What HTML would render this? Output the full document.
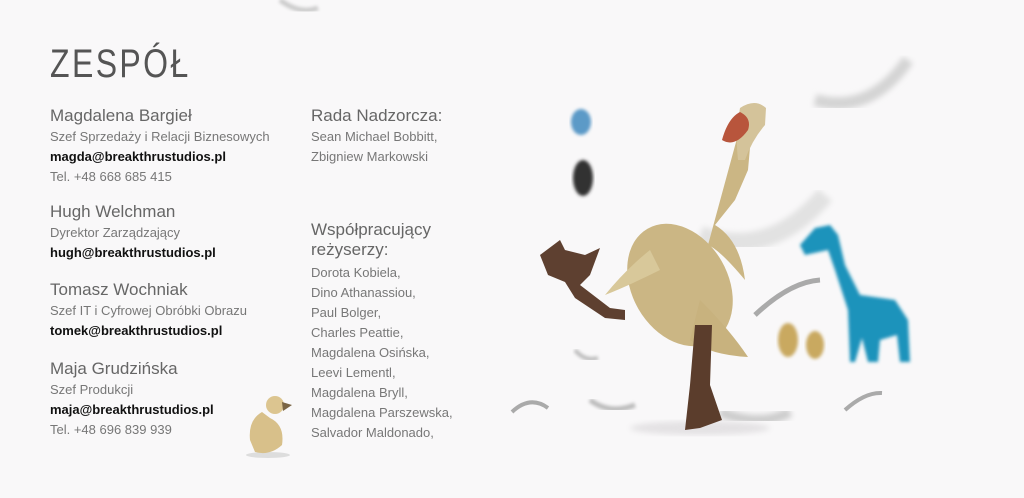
<!DOCTYPE html>
<html><head><meta charset="utf-8"><style>
html,body{margin:0;padding:0;}
body{width:1024px;height:498px;background:#f9f8f9;position:relative;overflow:hidden;font-family:"Liberation Sans",sans-serif;}
.t{position:absolute;white-space:nowrap;}
.h{font-size:17px;color:#666;}
.s{font-size:13px;color:#777;}
.m{font-size:13px;color:#111;font-weight:bold;}
#title{left:50px;top:42px;font-size:40px;color:#555;letter-spacing:3px;transform:scaleX(0.8);transform-origin:left top;}
</style></head><body>
<div class="t" id="title">ZESPÓŁ</div>

<div class="t h" style="left:50px;top:106px">Magdalena Bargieł</div>
<div class="t s" style="left:50px;top:129px">Szef Sprzedaży i Relacji Biznesowych</div>
<div class="t m" style="left:50px;top:149px">magda@breakthrustudios.pl</div>
<div class="t s" style="left:50px;top:169px">Tel. +48 668 685 415</div>

<div class="t h" style="left:50px;top:202px">Hugh Welchman</div>
<div class="t s" style="left:50px;top:225px">Dyrektor Zarządzający</div>
<div class="t m" style="left:50px;top:245px">hugh@breakthrustudios.pl</div>

<div class="t h" style="left:50px;top:280px">Tomasz Wochniak</div>
<div class="t s" style="left:50px;top:303px">Szef IT i Cyfrowej Obróbki Obrazu</div>
<div class="t m" style="left:50px;top:323px">tomek@breakthrustudios.pl</div>

<div class="t h" style="left:50px;top:359px">Maja Grudzińska</div>
<div class="t s" style="left:50px;top:382px">Szef Produkcji</div>
<div class="t m" style="left:50px;top:402px">maja@breakthrustudios.pl</div>
<div class="t s" style="left:50px;top:422px">Tel. +48 696 839 939</div>

<div class="t h" style="left:311px;top:106px">Rada Nadzorcza:</div>
<div class="t s" style="left:311px;top:129px">Sean Michael Bobbitt,</div>
<div class="t s" style="left:311px;top:149px">Zbigniew Markowski</div>

<div class="t h" style="left:311px;top:220px">Współpracujący</div>
<div class="t h" style="left:311px;top:240px">reżyserzy:</div>
<div class="t s" style="left:311px;top:263px;line-height:20px">Dorota Kobiela,<br>Dino Athanassiou,<br>Paul Bolger,<br>Charles Peattie,<br>Magdalena Osińska,<br>Leevi Lementl,<br>Magdalena Bryll,<br>Magdalena Parszewska,<br>Salvador Maldonado,</div>

<svg width="1024" height="498" style="position:absolute;left:0;top:0" xmlns="http://www.w3.org/2000/svg">
<defs><filter id="b"><feGaussianBlur stdDeviation="3"/></filter><filter id="b2"><feGaussianBlur stdDeviation="1.5"/></filter></defs>
<!-- little duckling -->
<ellipse cx="268" cy="455" rx="22" ry="3" fill="#ddd"/>
<path d="M250 440 Q248 420 262 412 L270 418 Q285 425 282 445 Q270 456 255 452Z" fill="#d8c08a"/>
<circle cx="275" cy="405" r="9" fill="#dcc590"/>
<path d="M282 402 L292 405 L283 411Z" fill="#7a6545"/>
<!-- feathers blur -->
<path d="M280 0 Q300 15 318 8" stroke="#ccc" stroke-width="5" fill="none" filter="url(#b2)"/>
<path d="M815 100 Q870 115 908 60" stroke="#d4d4d4" stroke-width="12" fill="none" filter="url(#b)"/>
<path d="M700 235 Q770 260 825 195" stroke="#e2e2e2" stroke-width="18" fill="none" filter="url(#b)"/>
<path d="M575 350 Q585 362 598 358" stroke="#bbb" stroke-width="4" fill="none" filter="url(#b2)"/>
<path d="M590 400 Q610 415 635 405" stroke="#bbb" stroke-width="5" fill="none" filter="url(#b2)"/>
<path d="M720 412 Q760 428 790 412" stroke="#ccc" stroke-width="10" fill="none" filter="url(#b)"/>
<path d="M512 412 Q530 395 548 408" stroke="#aaa" stroke-width="4" fill="none"/>
<path d="M845 410 Q865 392 882 393" stroke="#aaa" stroke-width="4" fill="none"/>
<path d="M755 315 Q790 282 820 280" stroke="#aaa" stroke-width="5" fill="none"/>
<!-- balloon bird -->
<ellipse cx="581" cy="122" rx="10" ry="13" fill="#5b9ac7" filter="url(#b2)"/>
<ellipse cx="583" cy="178" rx="10" ry="18" fill="#333" filter="url(#b2)"/>
<!-- giraffe -->
<g fill="#1f93bb" filter="url(#b2)">
<path d="M800 245 L815 228 L830 225 L838 235 L845 265 L860 295 L895 300 L908 320 L910 362 L900 362 L897 335 L880 340 L878 362 L868 362 L862 338 L855 362 L850 362 L848 310 L835 270 L828 250 L805 255Z"/>
</g>
<!-- ducklings -->
<ellipse cx="788" cy="340" rx="10" ry="17" fill="#c9a960" filter="url(#b2)"/>
<ellipse cx="815" cy="345" rx="9" ry="14" fill="#c9a960" filter="url(#b2)"/>
<!-- main duck -->
<ellipse cx="700" cy="428" rx="70" ry="7" fill="#e4e2e4" filter="url(#b)"/>
<path d="M540 255 L560 240 L565 250 L585 255 L600 248 L590 275 L580 285 L610 308 L625 310 L625 320 L605 318 L575 298 L565 282 L548 275Z" fill="#5e4030"/>
<path d="M742 120 L752 125 L748 170 L735 200 L715 225 Q740 240 745 280 Q720 250 708 245 Z" fill="#cbb684"/>
<ellipse cx="680" cy="285" rx="48" ry="65" transform="rotate(-30 680 285)" fill="#cbb684"/>
<path d="M650 250 Q625 270 605 295 Q630 285 660 270Z" fill="#d8c89a"/>
<path d="M700 300 Q730 330 748 357 Q710 355 690 340Z" fill="#c8b27e"/>
<path d="M740 108 Q755 98 766 108 L765 125 Q752 140 745 160 L738 160 Q735 135 740 108Z" fill="#d4c39a"/>
<path d="M740 112 Q728 118 722 140 Q735 148 748 130 Q752 118 740 112Z" fill="#b8553c"/>
<path d="M695 325 L712 325 L710 385 L722 420 L700 428 L685 430 L690 385Z" fill="#5b3d2c"/>
</svg>
</body></html>
